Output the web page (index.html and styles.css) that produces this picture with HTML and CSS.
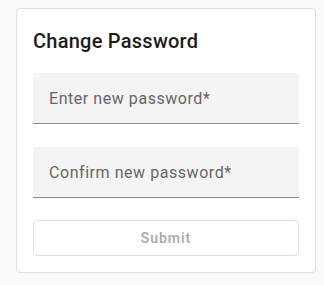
FILE: index.html
```html
<!DOCTYPE html>
<html>
<head>
<meta charset="utf-8">
<link rel="stylesheet" href="styles.css">
</head>
<body>
<div class="page">
  <form class="card">
    <h2 class="title">Change Password</h2>
    <div class="field"><span class="label">Enter new password*</span></div>
    <div class="field second"><span class="label">Confirm new password*</span></div>
    <button type="button" class="submit" disabled>Submit</button>
  </form>
</div>
</body>
</html>
```

FILE: styles.css
```css
html, body {
  margin: 0;
  padding: 0;
  background: #fafafa;
  font-family: Roboto, "Liberation Sans", sans-serif;
}
.page {
  padding: 8px 8px 8px 16px;
}
.card {
  box-sizing: border-box;
  width: 300px;
  height: 265px;
  background: #fff;
  border: 1px solid #e0e0e0;
  border-radius: 4px;
  padding: 16px;
  display: flex;
  flex-direction: column;
}
.title {
  margin: 0 0 16px;
  font-size: 20px;
  font-weight: 500;
  line-height: 32px;
  color: #1c1c1c;
  letter-spacing: 0.25px;
}
.field {
  height: 50px;
  box-sizing: content-box;
  background: #f4f4f4;
  border-bottom: 1px solid #8a8a8a;
  border-radius: 4px 4px 0 0;
  padding: 0 16px;
  display: flex;
  align-items: flex-start;
}
.field .label {
  margin-top: 14px;
  font-size: 16px;
  line-height: 24px;
  color: #666;
  letter-spacing: 0.55px;
}
.field.second {
  margin-top: 23px;
}
.submit {
  margin-top: 22px;
  height: 36px;
  background: #fff;
  border: 1px solid #e0e0e0;
  border-radius: 4px;
  font-family: Roboto, "Liberation Sans", sans-serif;
  font-size: 14px;
  font-weight: 500;
  letter-spacing: 1px;
  color: #a8a8a8;
  padding: 0;
}
```
